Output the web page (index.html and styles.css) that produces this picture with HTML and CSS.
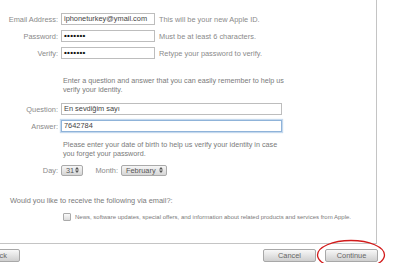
FILE: index.html
```html
<!DOCTYPE html>
<html lang="en">
<head>
  <meta charset="utf-8">
  <title>Apple ID</title>
  <link rel="stylesheet" href="styles.css">
</head>
<body>
  <div class="panel">
    <div class="row">
      <span class="label">Email Address:</span>
      <span class="field">iphoneturkey@ymail.com</span>
      <span class="hint">This will be your new Apple ID.</span>
    </div>
    <div class="row">
      <span class="label">Password:</span>
      <span class="field dots">&#8226;&#8226;&#8226;&#8226;&#8226;&#8226;&#8226;</span>
      <span class="hint">Must be at least 6 characters.</span>
    </div>
    <div class="row">
      <span class="label">Verify:</span>
      <span class="field dots">&#8226;&#8226;&#8226;&#8226;&#8226;&#8226;&#8226;</span>
      <span class="hint">Retype your password to verify.</span>
    </div>

    <p class="note first">Enter a question and answer that you can easily remember to help us verify your identity.</p>

    <div class="row">
      <span class="label">Question:</span>
      <span class="field wide">En sevdiğim sayı</span>
    </div>
    <div class="row">
      <span class="label">Answer:</span>
      <span class="field wide focus">7642784</span>
    </div>

    <p class="note date">Please enter your date of birth to help us verify your identity in case you forget your password.</p>

    <div class="row">
      <span class="label">Day:</span>
      <span class="select day">31 <svg width="4" height="6" viewBox="0 0 4 6"><path d="M2 0L4 2.4H0Z M2 6L4 3.6H0Z" fill="#555"/></svg></span>
      <span class="label month-label">Month:</span>
      <span class="select month">February <svg width="4" height="6" viewBox="0 0 4 6"><path d="M2 0L4 2.4H0Z M2 6L4 3.6H0Z" fill="#555"/></svg></span>
    </div>

    <p class="question">Would you like to receive the following via email?:</p>

    <div class="check-row">
      <span class="checkbox"></span>
      <span>News, software updates, special offers, and information about related products and services from Apple.</span>
    </div>
  </div>

  <div class="buttons">
    <span class="btn back">Back</span>
    <span class="btn cancel">Cancel</span>
    <span class="btn continue">Continue</span>
    <svg class="circle" width="72" height="34" viewBox="0 0 72 34">
      <ellipse cx="36" cy="17" rx="33.5" ry="14.5" fill="none" stroke="#d21b1b" stroke-width="1.3"/>
    </svg>
  </div>
</body>
</html>
```

FILE: styles.css
```css
body {
  margin: 0;
  font-family: "Liberation Sans", Arial, sans-serif;
  font-size: 7.4px;
  color: #8a8a8a;
  background: #fff;
  overflow: hidden;
}

.panel {
  width: 377px;
  height: 244px;
  box-sizing: border-box;
  border-right: 1px solid #c4c4c4;
  border-bottom: 1px solid #c4c4c4;
  padding-top: 13px;
}

.row {
  display: flex;
  align-items: center;
  height: 12px;
  margin-bottom: 5px;
}

.label {
  width: 58px;
  text-align: right;
  padding-right: 3px;
}

.field {
  width: 94px;
  height: 12px;
  box-sizing: border-box;
  border: 1px solid #bdbdbd;
  padding: 0 2px;
  line-height: 10px;
  color: #444;
  white-space: nowrap;
  overflow: hidden;
}

.dots {
  color: #111;
  letter-spacing: 0.3px;
  font-size: 8px;
  font-weight: bold;
}

.field.wide {
  width: 221px;
}

.field.focus {
  border-color: #8fb3d9;
  box-shadow: 0 0 1px 1px #c5d9ee;
}

.hint {
  margin-left: 4px;
}

.note {
  margin: 17px 0 9px 63px;
  width: 225px;
  line-height: 9px;
  color: #7a7a7a;
  font-size: 7.2px;
}

.note.date {
  margin: 8px 0 6px 63px;
}

.select {
  display: flex;
  align-items: center;
  justify-content: space-between;
  height: 11px;
  box-sizing: border-box;
  padding: 0 3px 0 4px;
  border: 1px solid #aaa;
  border-radius: 2px;
  background: linear-gradient(#f6f6f6, #d6d6d6);
  color: #555;
}

.select.day {
  width: 22px;
}

.select.month {
  width: 46px;
}

.month-label {
  width: 35px;
}

.question {
  margin: 20px 0 8px 10px;
  color: #7a7a7a;
}

.check-row {
  display: flex;
  align-items: center;
  padding-left: 63px;
  gap: 4px;
  color: #7a7a7a;
  font-size: 6px;
  white-space: nowrap;
}

.checkbox {
  width: 6px;
  height: 6px;
  border: 1px solid #aaa;
  border-radius: 1px;
  background: linear-gradient(#fafafa, #dcdcdc);
}

.buttons {
  position: relative;
  display: flex;
  margin-top: 5px;
  height: 14px;
}

.btn {
  display: flex;
  align-items: center;
  justify-content: center;
  height: 13px;
  box-sizing: border-box;
  border: 1px solid #a8a8a8;
  border-radius: 2px;
  background: linear-gradient(#f8f8f8, #cfcfcf);
  color: #666;
}

.back {
  width: 54px;
  margin-left: -34px;
  justify-content: flex-end;
  padding-right: 12px;
}

.cancel {
  width: 53px;
  margin-left: 243px;
}

.continue {
  width: 53px;
  margin-left: 9px;
}

.circle {
  position: absolute;
  left: 315px;
  top: -11px;
}
```
